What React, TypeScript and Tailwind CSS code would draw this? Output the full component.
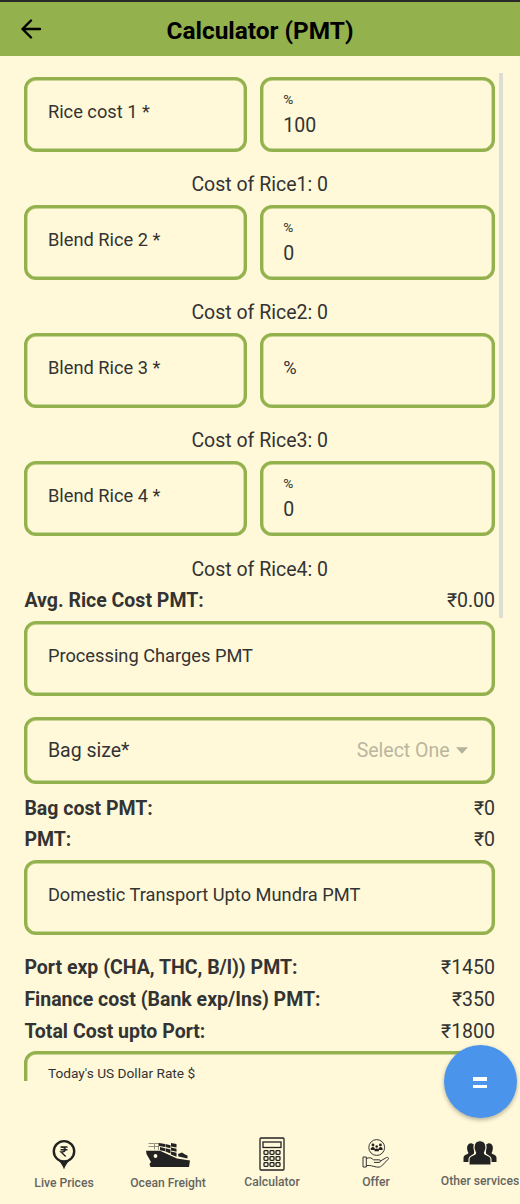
import type { ReactNode } from 'react';

const BOX = 'border-[3px] border-[#93b14c] rounded-[12px] pl-[20.5px] shadow-[inset_0_0_0_0.4px_#93b14c]';

type FieldProps = { label: string; value?: string; className?: string };

function Field({ label, value, className = '' }: FieldProps) {
  return (
    <div className={`h-[75px] ${BOX} ${className}`}>
      {value === undefined ? (
        <div className="pt-[20px] text-[18.25px] leading-[24px]">{label}</div>
      ) : (
        <>
          <div className="pt-[10.5px] text-[13.7px] leading-[16px]">{label}</div>
          <div className="pt-[7px] text-[19.5px] leading-[24px]">{value}</div>
        </>
      )}
    </div>
  );
}

function RiceRow({ name, percent, index }: { name: string; percent?: string; index: number }) {
  return (
    <div className="h-[128.1px]">
      <div className="flex gap-[12.4px]">
        <Field label={name} className="w-[223px]" />
        <Field label="%" value={percent} className="flex-1" />
      </div>
      <div className="pt-[21.3px] text-center text-[19.5px] leading-[24px]">Cost of Rice{index}: 0</div>
    </div>
  );
}

function Total({ label, amount }: { label: string; amount: string }) {
  return (
    <div className="flex h-[31.7px] items-center justify-between text-[19.5px] leading-[24px]">
      <span className="font-bold">{label}</span>
      <span>{amount}</span>
    </div>
  );
}

function NavItem({ label, className = '', children }: { label: string; className?: string; children: ReactNode }) {
  return (
    <div className={`flex w-[104px] shrink-0 flex-col items-center ${className}`}>
      <div className="flex h-[40px] items-center justify-center">{children}</div>
      <span className="whitespace-nowrap text-[12.15px] font-medium leading-[16px] text-[#66655f]">{label}</span>
    </div>
  );
}

function PinIcon() {
  return (
    <svg width="24" height="32" viewBox="0 0 24 32" fill="none" stroke="#222">
      <path d="M5 20 C9 24 11 27 12 30.5 C13 27 15 24 19 20Z" fill="#222" stroke="none" />
      <circle cx="12" cy="12.3" r="10.2" fill="#fff9d8" strokeWidth="2.4" />
      <path d="M8.5 8h7M8.5 10.8h7M9 8c5.6 0 5.6 5 0 5l4.7 4.500" strokeWidth="1.400" />
    </svg>
  );
}

function ShipIcon() {
  return (
    <svg width="46" height="26" viewBox="0 0 46 26" fill="#222">
      <path d="M1 8.700 15 8.700 32 16.500 45 18.500 44 25H5.500L4.500 22 6 20 1.500 12Z" />
      <circle cx="10.500" cy="14" r="1.900" fill="#fff9d8" />
      <path d="M14 1l6 1v3l-6-1zM20.500 2l5 1.200v3l-5-1.200zM26 1l5.500 1v3.500l-5.500-1zM15 5l5 1.200v3l-5-1zM20.500 6.200l5 1.200v4l-5-2zM26 5.500l5.500 1.200v3l-5.500-1.200zM26 9.500l5.500 1.200v4l-5.500-2.200z" />
      <path d="M33 12l4-1.500 3 2 2.500 1v3l-9-2z" />
      <path d="M3.500 1.500h6v6M9.500 4.500h-6M10 1.500h4M10 4.500h4M13.500 1v7" fill="none" stroke="#66655a" strokeWidth=".7" />
    </svg>
  );
}

function CalculatorIcon() {
  return (
    <svg width="26" height="34" viewBox="0 0 26 34" fill="none" stroke="#222" strokeWidth="1.3">
      <rect x="1" y="1" width="24" height="32" rx="1" />
      <rect x="4" y="5" width="18" height="5.500" />
      {[13.7, 19.7, 25.7].map((y) =>
        [5, 11, 17].map((x) => <rect key={`${x}-${y}`} x={x} y={y} width="4" height="3.700" rx=".8" />),
      )}
    </svg>
  );
}

function OfferIcon() {
  return (
    <svg width="28" height="32" viewBox="0 0 28 32" fill="none" stroke="#333" strokeWidth="1">
      <circle cx="14.700" cy="9.500" r="7.900" />
      <g fill="#222" stroke="none">
        <circle cx="11" cy="7" r="1.400" />
        <circle cx="18.400" cy="7" r="1.400" />
        <circle cx="14.700" cy="8.500" r="1.300" />
        <path d="M8.800 12V10.200q2.200-2.500 4 0V12zM16.600 12V10.200q2.200-2.500 4 0V12zM12.500 13.200V11.600q2.200-2.400 4.400 0v1.600z" />
      </g>
      <path d="M1 19h3.300v10H1zM4.500 20.500c3-1.300 5-.8 7 1.300h5.700c1.700 0 1.700 2.600 0 2.600H12M18.500 23l6-3.500c1.500-.6 2.600.7 1.500 1.900l-6.500 6.700c-1 1-3 1.200-5 .9-4-.7-6-2-10-1.400" />
    </svg>
  );
}

function PeopleIcon() {
  return (
    <svg width="34" height="26" viewBox="0 0 34 26" fill="#222">
      <path d="M.5 22V18c0-2.500 1.500-3 4-4 1.200-.5 1-1.500.2-2.500C3 7 5 2.500 9 3.500l2 1v9L6 18v4z" />
      <path d="M33.500 22V18c0-2.500-1.500-3-4-4-1.200-.5-1-1.500-.2-2.500C31 7 29 2.500 25 3.500l-2 1v9l5 4.500v4z" />
      <path d="M6 25V19.500c0-3.500 2.500-3.600 5.500-5 1.200-.6 1.400-1.800.6-3C9.500 6.500 11.500.7 17 .7s7.500 5.800 4.900 10.800c-.8 1.200-.6 2.400.6 3 3 1.400 5.500 1.500 5.500 5V25z" stroke="#fff9d8" strokeWidth="1.100" />
    </svg>
  );
}

export default function App() {
  return (
    <div className="relative flex h-[1204px] w-[520px] flex-col overflow-hidden bg-[#fff9d9] font-[Roboto,sans-serif] text-[#333]">
      <header className="flex h-[56px] shrink-0 items-center border-t-2 border-[#292929] bg-[#93b14c] text-black">
        <div className="flex w-[60px] pl-[21px]">
          <svg width="21" height="20" viewBox="0 0 21 20" fill="none" stroke="#000" strokeWidth="2.400" strokeLinecap="round" strokeLinejoin="round">
            <path d="M19 10H1.500M10 1.500 1.500 10 10 18.500" />
          </svg>
        </div>
        <h1 className="flex-1 pt-[3px] text-center text-[24.4px] font-bold leading-[30px]">Calculator (PMT)</h1>
        <div className="w-[60px]" />
      </header>

      <main className="h-[1025px] shrink-0 overflow-hidden pl-[24.4px] pr-[25px] pt-[21px]">
        <RiceRow name="Rice cost 1 *" percent="100" index={1} />
        <RiceRow name="Blend Rice 2 *" percent="0" index={2} />
        <RiceRow name="Blend Rice 3 *" index={3} />
        <RiceRow name="Blend Rice 4 *" percent="0" index={4} />
        <div className="-mt-[4.100px]">
          <Total label="Avg. Rice Cost PMT:" amount="₹0.00" />
        </div>
        <Field label="Processing Charges PMT" className="mt-[4.100px]" />
        <div className={`mt-[21px] flex h-[67px] items-center justify-between pr-[24.400px] text-[19.500px] ${BOX}`}>
          <span>Bag size*</span>
          <span className="flex items-center gap-[6px] text-[#bab69f]">
            Select One
            <svg width="12" height="7" viewBox="0 0 13 7" fill="#b5b29c"><path d="M0 0h13L6.500 7z" /></svg>
          </span>
        </div>
        <div className="mt-[8.700px] mb-[4.100px]">
          <Total label="Bag cost PMT:" amount="₹0" />
          <Total label="PMT:" amount="₹0" />
        </div>
        <Field label="Domestic Transport Upto Mundra PMT" />
        <div className="mt-[17.300px] mb-[3.500px]">
          <Total label="Port exp (CHA, THC, B/l)) PMT:" amount="₹1450" />
          <Total label="Finance cost (Bank exp/Ins) PMT:" amount="₹350" />
          <Total label="Total Cost upto Port:" amount="₹1800" />
        </div>
        <Field label="Today's US Dollar Rate $" value="" />
      </main>

      <nav className="mt-[53px] flex items-start pl-[12px]">
        <NavItem label="Live Prices" className="pt-px"><PinIcon /></NavItem>
        <NavItem label="Ocean Freight" className="pt-px"><ShipIcon /></NavItem>
        <NavItem label="Calculator"><CalculatorIcon /></NavItem>
        <NavItem label="Offer"><OfferIcon /></NavItem>
        <NavItem label="Other services" className="-mt-px"><PeopleIcon /></NavItem>
      </nav>

      <div className="absolute left-[499px] top-[73px] h-[545px] w-[4px] bg-[#deddd5]" />
      <button className="absolute left-[444px] top-[1045px] flex size-[73px] flex-col items-center justify-center gap-[4px] rounded-full bg-[#4a94ec] pr-px pt-[2px] shadow-[0_2px_4px_rgba(0,0,0,0.3)]" aria-label="Calculate">
        <span className="h-[3.500px] w-[14px] bg-white" />
        <span className="h-[3.500px] w-[14px] bg-white" />
      </button>
    </div>
  );
}
